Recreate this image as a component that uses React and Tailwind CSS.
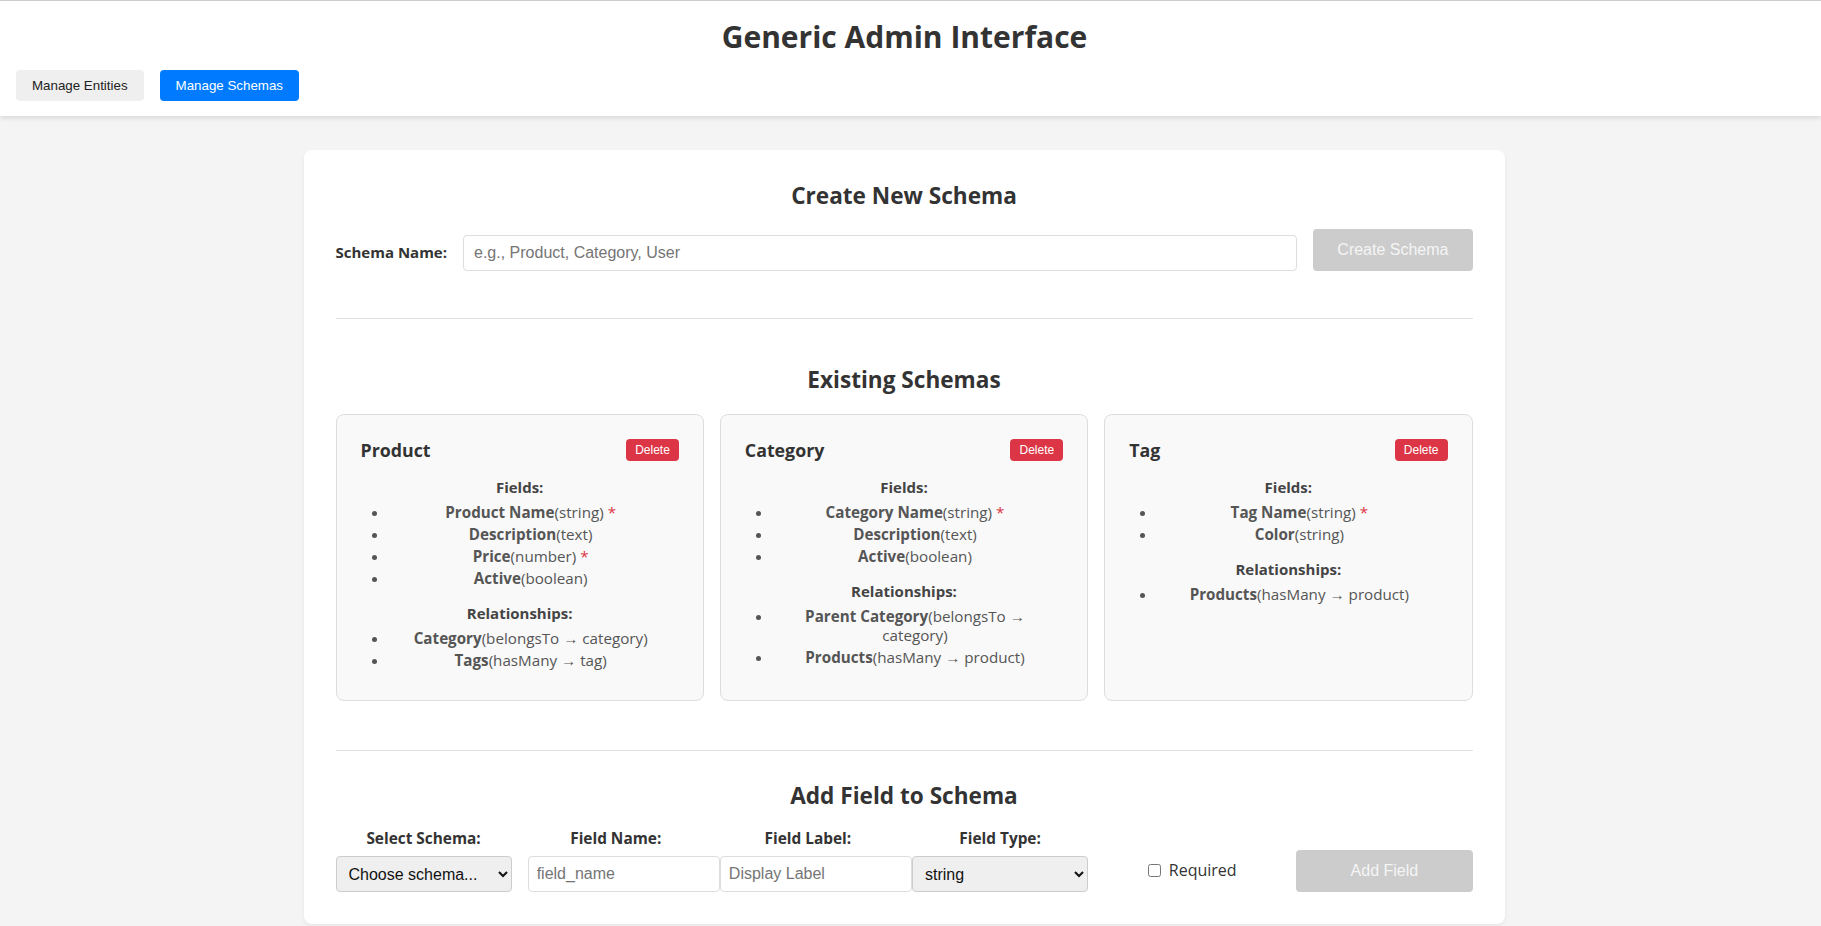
import { useState } from 'react';

const schemas = [
  {
    name: 'Product',
    fields: [
      { label: 'Product Name', type: 'string', required: true },
      { label: 'Description', type: 'text' },
      { label: 'Price', type: 'number', required: true },
      { label: 'Active', type: 'boolean' },
    ],
    relationships: [
      { label: 'Category', type: 'belongsTo', target: 'category' },
      { label: 'Tags', type: 'hasMany', target: 'tag' },
    ],
  },
  {
    name: 'Category',
    fields: [
      { label: 'Category Name', type: 'string', required: true },
      { label: 'Description', type: 'text' },
      { label: 'Active', type: 'boolean' },
    ],
    relationships: [
      { label: 'Parent Category', type: 'belongsTo', target: 'category' },
      { label: 'Products', type: 'hasMany', target: 'product' },
    ],
  },
  {
    name: 'Tag',
    fields: [
      { label: 'Tag Name', type: 'string', required: true },
      { label: 'Color', type: 'string' },
    ],
    relationships: [{ label: 'Products', type: 'hasMany', target: 'product' }],
  },
];

const fieldTypes = ['string', 'text', 'number', 'boolean', 'date'];

function SchemaCard({ schema }) {
  return (
    <div className="bg-[#f9f9f9] border border-[#ddd] rounded-lg px-6 pt-6 pb-[25px]">
      <div className="flex items-center justify-between mb-[17px]">
        <h3 className="text-[17.8px] font-bold leading-[22px] text-[#333]">{schema.name}</h3>
        <button className="bg-[#dc3545] text-white text-[12px] font-['Liberation_Sans',Arial,sans-serif] px-[9px] py-1 rounded leading-[14px]">
          Delete
        </button>
      </div>

      {/* Fields */}
      <h4 className="text-center text-[15px] font-bold leading-[18px] text-[#444] mb-[5px]">Fields:</h4>
      <ul className="list-disc pl-[28px] pr-[6px] mb-1 text-[#555] text-center text-[15.2px]">
        {schema.fields.map((f, i) => (
          <li key={i} className="leading-[19px] py-[1.5px]">
            <span className="font-bold">{f.label}</span>({f.type})
            {f.required && <span className="text-[#dc3545]"> *</span>}
          </li>
        ))}
      </ul>

      {/* Relationships */}
      {schema.relationships.length > 0 && (
        <>
          <h4 className="text-center text-[15px] font-bold leading-[18px] text-[#444] mt-[15px] mb-[5px]">
            Relationships:
          </h4>
          <ul className="list-disc pl-[28px] pr-[6px] mb-1 text-[#555] text-center text-[15.2px]">
            {schema.relationships.map((r, i) => (
              <li key={i} className="leading-[19px] py-[1.5px]">
                <span className="font-bold">{r.label}</span>({r.type} → {r.target})
              </li>
            ))}
          </ul>
        </>
      )}
    </div>
  );
}

export default function App() {
  const [view, setView] = useState('schemas');
  const [schemaName, setSchemaName] = useState('');
  const [required, setRequired] = useState(false);

  return (
    <div className="min-h-screen bg-[#f4f4f4] text-[#333] font-['Open_Sans','Noto_Sans',sans-serif]">
      {/* Header */}
      <header className="bg-white border-t border-[#ccc] shadow-[0_2px_5px_rgba(0,0,0,0.12)] pl-4 pr-[28px] pt-4 pb-[15px]">
        <h1 className="text-center text-[30px] font-bold leading-[40px] text-[#333]">Generic Admin Interface</h1>
        <nav className="flex gap-4 mt-[13px] font-['Liberation_Sans',Arial,sans-serif] text-[13.33px]">
          <button
            onClick={() => setView('entities')}
            className={`px-4 py-2 rounded leading-[15px] ${view === 'entities' ? 'bg-[#007bff] text-white' : 'bg-[#efefef] text-[#222]'}`}
          >
            Manage Entities
          </button>
          <button
            onClick={() => setView('schemas')}
            className={`px-4 py-2 rounded leading-[15px] ${view === 'schemas' ? 'bg-[#007bff] text-white' : 'bg-[#efefef] text-[#222]'}`}
          >
            Manage Schemas
          </button>
        </nav>
      </header>

      <main className="pt-[34px] pb-8 pr-[13px]">
        <div className="mx-auto w-[1201px] bg-white rounded-lg shadow-[0_2px_4px_rgba(0,0,0,0.06)] p-8">
          {/* Create New Schema */}
          <section className="pb-[47px] border-b border-[#e0e0e0]">
            <h2 className="text-center text-[22.6px] font-bold leading-[28px] mb-[19px]">Create New Schema</h2>
            <div className="flex items-end gap-4">
              <label className="self-center font-bold text-[15px] leading-[18px] mb-[-4px]">Schema Name:</label>
              <input
                value={schemaName}
                onChange={(e) => setSchemaName(e.target.value)}
                placeholder="e.g., Product, Category, User"
                className="flex-1 h-9 px-[10px] border border-[#ddd] rounded font-['Liberation_Sans',Arial,sans-serif] text-base placeholder:text-[#757575] outline-none"
              />
              <button
                disabled={!schemaName}
                className="h-[42px] px-6 rounded bg-[#ccc] text-[#f5f5f5] text-base font-['Liberation_Sans',Arial,sans-serif]"
              >
                Create Schema
              </button>
            </div>
          </section>

          {/* Existing Schemas */}
          <section className="pt-[47px] pb-[49px] border-b border-[#e0e0e0]">
            <h2 className="text-center text-[22.6px] font-bold leading-[28px] mb-5">Existing Schemas</h2>
            <div className="grid grid-cols-3 gap-4">
              {schemas.map((s) => (
                <SchemaCard key={s.name} schema={s} />
              ))}
            </div>
          </section>

          {/* Add Field */}
          <section className="pt-[31px]">
            <h2 className="text-center text-[22.6px] font-bold leading-[28px] mb-5">Add Field to Schema</h2>
            <div className="grid grid-cols-6 gap-4 items-end">
              <div className="flex flex-col">
                <label className="text-center font-bold text-[15.4px] leading-[18px] mb-2">Select Schema:</label>
                <select className="h-9 w-full px-2 bg-[#efefef] border border-[#ccc] rounded text-base text-[#111] font-['Liberation_Sans',Arial,sans-serif]">
                  <option>Choose schema...</option>
                  {schemas.map((s) => (
                    <option key={s.name}>{s.name}</option>
                  ))}
                </select>
              </div>
              <div className="flex flex-col">
                <label className="text-center font-bold text-[15.4px] leading-[18px] mb-2">Field Name:</label>
                <input
                  placeholder="field_name"
                  className="h-9 w-[192px] px-2 border border-[#ddd] rounded bg-white text-base font-['Liberation_Sans',Arial,sans-serif] placeholder:text-[#757575] outline-none"
                />
              </div>
              <div className="flex flex-col">
                <label className="text-center font-bold text-[15.4px] leading-[18px] mb-2">Field Label:</label>
                <input
                  placeholder="Display Label"
                  className="h-9 w-[192px] px-2 border border-[#ddd] rounded bg-white text-base font-['Liberation_Sans',Arial,sans-serif] placeholder:text-[#757575] outline-none"
                />
              </div>
              <div className="flex flex-col">
                <label className="text-center font-bold text-[15.4px] leading-[18px] mb-2">Field Type:</label>
                <select className="h-9 w-full px-2 bg-[#efefef] border border-[#ccc] rounded text-base text-[#111] font-['Liberation_Sans',Arial,sans-serif]">
                  {fieldTypes.map((t) => (
                    <option key={t}>{t}</option>
                  ))}
                </select>
              </div>
              <label className="h-[44px] flex items-center justify-center gap-2 text-base text-[#333]">
                <input
                  type="checkbox"
                  checked={required}
                  onChange={(e) => setRequired(e.target.checked)}
                  className="w-[13px] h-[13px]"
                />
                Required
              </label>
              <button className="h-[42px] w-full rounded bg-[#ccc] text-[#f5f5f5] text-base font-['Liberation_Sans',Arial,sans-serif]">
                Add Field
              </button>
            </div>
          </section>
        </div>
      </main>
    </div>
  );
}
